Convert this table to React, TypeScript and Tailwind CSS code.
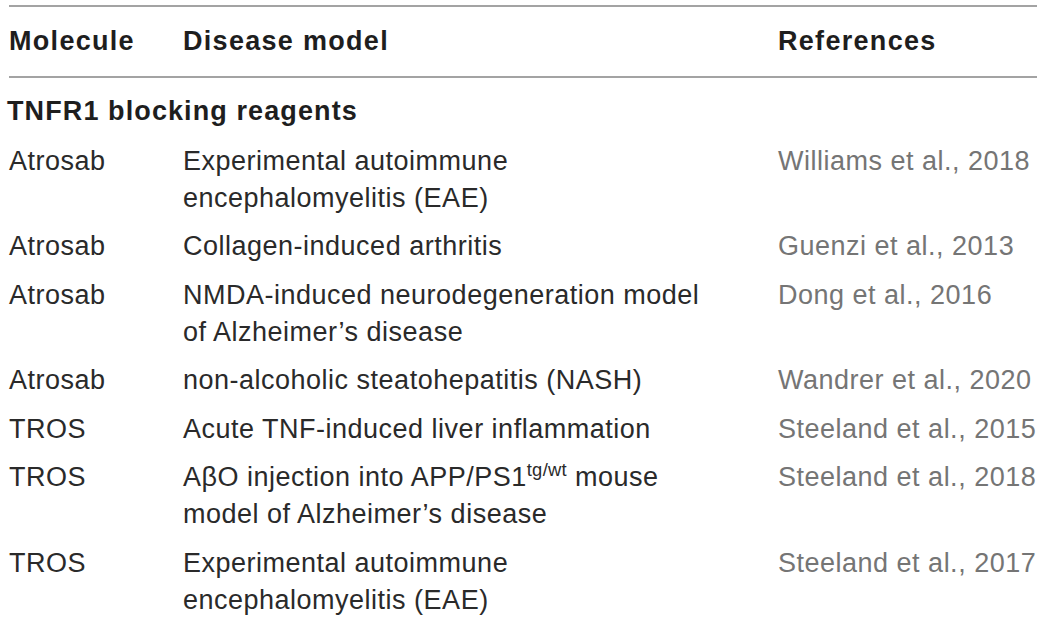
const rows: { molecule: string; model: React.ReactNode; refs: string }[] = [
  { molecule: "Atrosab", model: <>Experimental autoimmune<br />encephalomyelitis (EAE)</>, refs: "Williams et al., 2018" },
  { molecule: "Atrosab", model: "Collagen-induced arthritis", refs: "Guenzi et al., 2013" },
  { molecule: "Atrosab", model: <>NMDA-induced neurodegeneration model<br />of Alzheimer’s disease</>, refs: "Dong et al., 2016" },
  { molecule: "Atrosab", model: "non-alcoholic steatohepatitis (NASH)", refs: "Wandrer et al., 2020" },
  { molecule: "TROS", model: "Acute TNF-induced liver inflammation", refs: "Steeland et al., 2015" },
  {
    molecule: "TROS",
    model: <>AβO injection into APP/PS1<sup className="text-[0.68em] top-[-0.55em] tracking-[0.3px]">tg/wt</sup> mouse<br />model of Alzheimer’s disease</>,
    refs: "Steeland et al., 2018",
  },
  { molecule: "TROS", model: <>Experimental autoimmune<br />encephalomyelitis (EAE)</>, refs: "Steeland et al., 2017" },
];

export default function App() {
  return (
    <div className="w-[1043px] h-[622px] bg-white overflow-hidden pt-[5px] pl-[9px] pr-[6px]" style={{ fontFamily: '"Liberation Sans", Arial, sans-serif' }}>
      <div className="border-t-2 border-b-2 border-[#a3a3a3] grid grid-cols-[174px_595px_1fr] h-[73px] items-center text-[27px] font-bold tracking-[1.3px] text-[#1e1e1e]">
        <div>Molecule</div>
        <div>Disease model</div>
        <div>References</div>
      </div>
      <div className="pt-[15px] pb-[7px] text-[27px] leading-[37px] font-bold tracking-[1.1px] text-[#1e1e1e] -ml-[2px]">TNFR1 blocking reagents</div>
      {rows.map((r, i) => (
        <div key={i} className="grid grid-cols-[174px_595px_1fr] py-[5.75px] text-[27px] leading-[37px] tracking-[0.5px] text-[#2a2a2a]">
          <div>{r.molecule}</div>
          <div>{r.model}</div>
          <div className="text-[#757575]">{r.refs}</div>
        </div>
      ))}
    </div>
  );
}
